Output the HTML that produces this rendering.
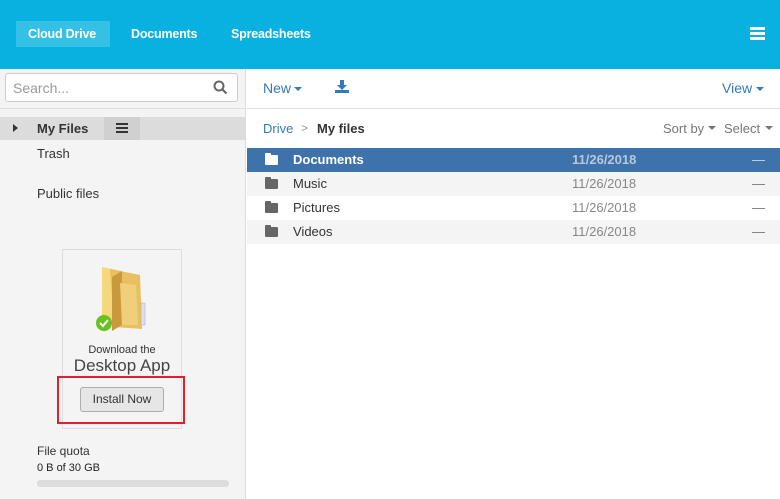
<!DOCTYPE html>
<html><head><style>
*{margin:0;padding:0;box-sizing:border-box}
body{width:780px;height:499px;overflow:hidden;font-family:"Liberation Sans",sans-serif;background:#fff;position:relative}
.a{position:absolute}
.hdr{left:0;top:0;width:780px;height:69px;background:#08b1e0}
.tab{top:21px;height:26px;line-height:26px;color:#fff;font-weight:bold;font-size:12.5px;padding:0 12px;letter-spacing:-0.2px}
.side{left:0;top:69px;width:246px;height:430px;background:#f4f4f4;border-right:1px solid #ddd}
.t{font-size:13px;color:#333}
.row{left:247px;width:533px;height:24px;font-size:13px;line-height:24px}
.fold{width:13px;height:10px;border-radius:1px;left:18px;top:7px}
.fold:before{content:"";position:absolute;left:0;top:-2px;width:6px;height:3px;background:inherit;border-radius:1px 1px 0 0}
.dash{left:505px;font-weight:normal;color:#777}
</style></head><body>
<div class="a hdr"></div>
<div class="a tab" style="left:16px;width:94px;background:#35c0e6">Cloud Drive</div>
<div class="a tab" style="left:119px">Documents</div>
<div class="a tab" style="left:219px">Spreadsheets</div>
<div class="a" style="left:750px;top:27px;width:15px;height:3px;background:#fff;box-shadow:0 5px 0 #fff,0 10px 0 #fff"></div>

<div class="a side"></div>
<div class="a" style="left:5px;top:73px;width:233px;height:29px;background:#fff;border:1px solid #ccc;border-radius:3px"></div>
<div class="a" style="left:13px;top:80px;font-size:14px;color:#999">Search...</div>
<svg class="a" style="left:213px;top:80px" width="15" height="15" viewBox="0 0 15 15"><circle cx="6" cy="6" r="4.5" fill="none" stroke="#666" stroke-width="2"/><path d="M9.5 9.5L13.5 13.5" stroke="#666" stroke-width="2.2"/></svg>
<div class="a" style="left:0;top:108px;width:246px;height:1px;background:#ddd"></div>
<div class="a" style="left:0;top:117px;width:246px;height:23px;background:#dcdcdc"></div>
<div class="a" style="left:104px;top:117px;width:36px;height:23px;background:#d0d0d0"></div>
<div class="a" style="left:116px;top:123px;width:12px;height:2px;background:#333;box-shadow:0 4px 0 #333,0 8px 0 #333"></div>
<div class="a" style="left:13px;top:124px;border-left:5px solid #333;border-top:4px solid transparent;border-bottom:4px solid transparent"></div>
<div class="a t" style="left:37px;top:121px;font-weight:bold;font-size:13px">My Files</div>
<div class="a t" style="left:37px;top:146px">Trash</div>
<div class="a t" style="left:37px;top:186px">Public files</div>

<div class="a" style="left:62px;top:249px;width:120px;height:180px;border:1px solid #ddd"></div>
<svg class="a" style="left:96px;top:265px" width="56" height="70" viewBox="0 0 56 70">
<path d="M6 2 L26 6 L26 60 L6 56Z" fill="#f5d77c"/>
<path d="M14 4 L44 10 L46 64 L18 62Z" fill="#e8c060"/>
<path d="M26 6 L26 60 L16 66 L16 12Z" fill="#c89a3c"/>
<path d="M24 18 L40 20 L42 60 L26 60Z" fill="#f0cf7a"/>
<rect x="45" y="38" width="4" height="22" fill="#dde" stroke="#aab" stroke-width=".5"/>
<circle cx="8" cy="58" r="8" fill="#68c11f"/>
<path d="M4 58 L7 61 L12 55" stroke="#fff" stroke-width="2" fill="none"/>
</svg>
<div class="a" style="left:62px;top:344px;width:120px;text-align:center;font-size:11px;color:#333">Download the</div>
<div class="a" style="left:62px;top:356px;width:120px;text-align:center;font-size:17px;color:#444">Desktop App</div>
<div class="a" style="left:57px;top:376px;width:128px;height:48px;border:2px solid #e0212b"></div>
<div class="a" style="left:80px;top:387px;width:84px;height:25px;background:#e6e6e6;border:1px solid #adadad;border-radius:3px;font-size:12px;color:#333;text-align:center;line-height:23px">Install Now</div>
<div class="a t" style="left:37px;top:444px;font-size:12px">File quota</div>
<div class="a" style="left:37px;top:462px;font-size:11px;color:#222">0 B of 30 GB</div>
<div class="a" style="left:37px;top:480px;width:192px;height:7px;background:#ddd;border-radius:3px"></div>

<div class="a" style="left:263px;top:80px;font-size:14px;color:#337ab7">New</div>
<div class="a" style="left:294px;top:87px;border-top:4px solid #337ab7;border-left:4px solid transparent;border-right:4px solid transparent"></div>
<svg class="a" style="left:334px;top:80px" width="16" height="14" viewBox="0 0 16 14"><path d="M6 0h4v5h3l-5 5-5-5h3z" fill="#337ab7"/><rect x="1" y="10" width="14" height="3" fill="#337ab7"/></svg>
<div class="a" style="left:722px;top:80px;font-size:14px;color:#337ab7">View</div>
<div class="a" style="left:756px;top:87px;border-top:4px solid #337ab7;border-left:4px solid transparent;border-right:4px solid transparent"></div>
<div class="a" style="left:247px;top:108px;width:533px;height:1px;background:#ddd"></div>
<div class="a" style="left:263px;top:121px;font-size:13px;color:#337ab7">Drive</div>
<div class="a" style="left:301px;top:121px;font-size:12px;color:#999">&gt;</div>
<div class="a" style="left:317px;top:121px;font-size:13px;color:#333;font-weight:bold">My files</div>
<div class="a" style="left:663px;top:121px;font-size:13px;color:#777">Sort by</div>
<div class="a" style="left:708px;top:126px;border-top:4px solid #777;border-left:4px solid transparent;border-right:4px solid transparent"></div>
<div class="a" style="left:724px;top:121px;font-size:13px;color:#777">Select</div>
<div class="a" style="left:765px;top:126px;border-top:4px solid #777;border-left:4px solid transparent;border-right:4px solid transparent"></div>
<div class="a" style="left:247px;top:148px;width:533px;height:1px;background:#ddd"></div>

<div class="a row" style="top:148px;background:#3d72aa;color:#fff;font-weight:bold"><div class="a fold" style="background:#fff"></div><span class="a" style="left:46px">Documents</span><span class="a" style="left:325px;color:#b7c8de">11/26/2018</span><span class="a dash" style="color:#c8d6e8">—</span></div>
<div class="a row" style="top:172px;background:#f4f4f4;color:#333"><div class="a fold" style="background:#666"></div><span class="a" style="left:46px">Music</span><span class="a" style="left:325px;color:#888">11/26/2018</span><span class="a dash">—</span></div>
<div class="a row" style="top:196px;background:#fff;color:#333"><div class="a fold" style="background:#666"></div><span class="a" style="left:46px">Pictures</span><span class="a" style="left:325px;color:#888">11/26/2018</span><span class="a dash">—</span></div>
<div class="a row" style="top:220px;background:#f4f4f4;color:#333"><div class="a fold" style="background:#666"></div><span class="a" style="left:46px">Videos</span><span class="a" style="left:325px;color:#888">11/26/2018</span><span class="a dash">—</span></div>
</body></html>
